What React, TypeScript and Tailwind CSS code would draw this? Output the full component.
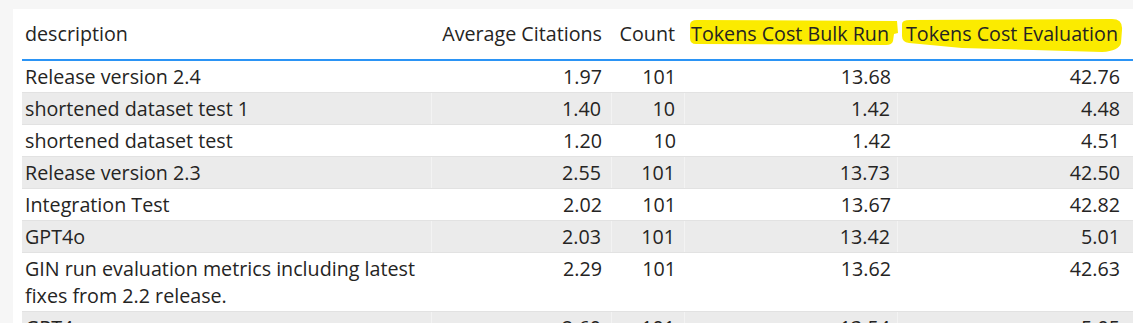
import React from 'react'

type Row = {
  description: string
  avg: string
  count: string
  bulk: string
  evaluation: string
}

const rows: Row[] = [
  { description: 'Release version 2.4', avg: '1.97', count: '101', bulk: '13.68', evaluation: '42.76' },
  { description: 'shortened dataset test 1', avg: '1.40', count: '10', bulk: '1.42', evaluation: '4.48' },
  { description: 'shortened dataset test', avg: '1.20', count: '10', bulk: '1.42', evaluation: '4.51' },
  { description: 'Release version 2.3', avg: '2.55', count: '101', bulk: '13.73', evaluation: '42.50' },
  { description: 'Integration Test', avg: '2.02', count: '101', bulk: '13.67', evaluation: '42.82' },
  { description: 'GPT4o', avg: '2.03', count: '101', bulk: '13.42', evaluation: '5.01' },
  {
    description: 'GIN run evaluation metrics including latest\nfixes from 2.2 release.',
    avg: '2.29',
    count: '101',
    bulk: '13.62',
    evaluation: '42.63',
  },
  { description: 'GPT4o', avg: '2.60', count: '101', bulk: '13.54', evaluation: '5.05' },
]

const cols = 'grid grid-cols-[410px_180px_73px_213px_1fr]'

function Highlights() {
  // marker strokes drawn over the header, page coordinates
  return (
    <svg
      className="pointer-events-none absolute left-0 top-0"
      width={1111}
      height={50}
      viewBox="22 9 1111 50"
    >
      <path
        d="M690 25 Q690 20 697 20 L897 21 L898 33 L894 34 L893 41 Q892 45 886 45 L696 44 Q690 44 690 38 Z"
        fill="#fbeb00"
      />
      <path
        d="M902 24 Q902 20 910 20 L1112 19 Q1123 19 1122 30 L1121 43 Q1119 51 1102 52 L962 48 L909 43 Q902 42 902 36 Z"
        fill="#fbeb00"
      />
    </svg>
  )
}

export default function App() {
  return (
    <div
      className="h-[323px] w-full overflow-hidden bg-[#f6f6f6] pl-[13px] pt-[9px] text-[#252423]"
      style={{ fontFamily: '"Open Sans", "Noto Sans", sans-serif' }}
    >
      <div className="h-full bg-white pl-[9px]">
        <div className={`relative ${cols} h-[52px] border-b-2 border-[#2b94f5] text-[19.7px] leading-[27px]`}>
          <Highlights />
          <div className="relative flex items-center pb-[2px] pl-[3px]">description</div>
          <div className="relative flex items-center justify-end pb-[2px] pr-[10px]">Average Citations</div>
          <div className="relative flex items-center justify-end pb-[2px] pr-[10px]">Count</div>
          <div className="relative flex items-center justify-end pb-[2px] pr-[9px]">Tokens Cost Bulk Run</div>
          <div className="relative flex items-center justify-end pb-[2px] pr-[15px]">Tokens Cost Evaluation</div>
        </div>
        {rows.map((r, i) => {
          const grey = i % 2 === 1
          const cell = grey ? 'border-r border-[#f3f3f3]' : ''
          return (
            <div
              key={i}
              className={`${cols} border-b border-[#e2e2e2] text-[19.7px] leading-[27px] ${grey ? 'bg-[#ebebeb]' : 'bg-white'}`}
            >
              <div className={`whitespace-pre-line py-[2px] pl-[3px] ${cell}`}>{r.description}</div>
              <div className={`py-[2px] pr-[10px] text-right ${cell}`}>{r.avg}</div>
              <div className={`py-[2px] pr-[9px] text-right ${cell}`}>{r.count}</div>
              <div className={`py-[2px] pr-[7px] text-right ${cell}`}>{r.bulk}</div>
              <div className="py-[2px] pr-[13px] text-right">{r.evaluation}</div>
            </div>
          )
        })}
      </div>
    </div>
  )
}
